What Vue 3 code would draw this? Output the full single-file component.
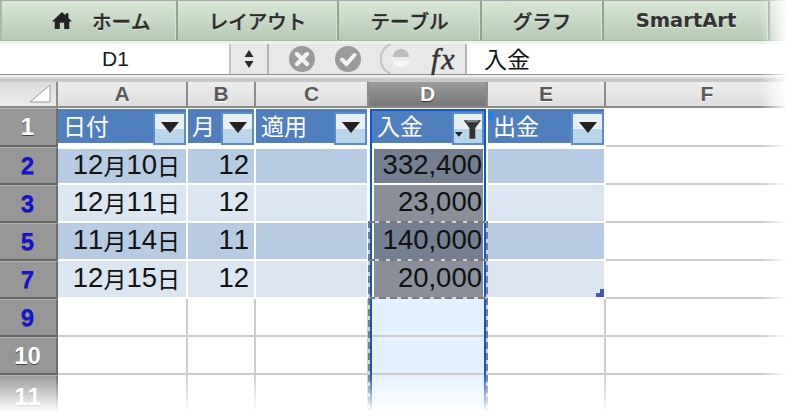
<script setup>
const tabs = ['レイアウト', 'テーブル', 'グラフ']
const letters = ['A', 'B', 'C', 'D', 'E', 'F']
const heads = [
  { t: '日付', c: 'a' },
  { t: '月', c: 'b' },
  { t: '適用', c: 'c' },
  { t: '入金', c: 'd', filter: true },
  { t: '出金', c: 'e' }
]
const rows = [
  { n: 2, m: 12, d: 10, mo: 12, v: '332,400', band: 'dark first' },
  { n: 3, m: 12, d: 11, mo: 12, v: '23,000', band: 'light' },
  { n: 5, m: 11, d: 14, mo: 11, v: '140,000', band: 'dark' },
  { n: 7, m: 12, d: 15, mo: 12, v: '20,000', band: 'light' }
]
const empties = [
  { n: 9, blue: true },
  { n: 10, blue: false },
  { n: 11, blue: false }
]
</script>

<template>
  <div class="page">
    <nav class="ribbon">
      <div class="tab home">
        <svg class="house" width="20" height="17" viewBox="0 0 22 18" preserveAspectRatio="none">
          <path d="M11 0 L15 3.6 V1.2 H18 V6.3 L22 10 H19 V18 H13.4 V11.5 H8.6 V18 H3 V10 H0 Z" fill="#222" />
        </svg>
        <span>ホーム</span>
      </div>
      <div v-for="t in tabs" :key="t" class="tab" :class="'w' + t.length">{{ t }}</div>
      <div class="tab smart">SmartArt</div>
      <div class="tab rest"></div>
    </nav>

    <section class="formula">
      <div class="name">D1</div>
      <div class="spin">
        <svg width="12" height="20" viewBox="0 0 12 20">
          <path d="M6 1 L10.5 8 H1.5 Z M6 19 L1.5 12 H10.5 Z" fill="#2a2a2a" />
        </svg>
      </div>
      <div class="tools">
        <svg class="icon-x" width="26" height="26" viewBox="0 0 26 26">
          <circle cx="13" cy="13" r="13" fill="#9b9b9b" />
          <path d="M8 8 L18 18 M18 8 L8 18" stroke="#f2f2f2" stroke-width="4.4" stroke-linecap="round" />
        </svg>
        <svg class="icon-c" width="26" height="26" viewBox="0 0 26 26">
          <circle cx="13" cy="13" r="13" fill="#9b9b9b" />
          <path d="M7 13.5 L11.5 18 L19.5 9" fill="none" stroke="#f2f2f2" stroke-width="4" stroke-linecap="round" />
        </svg>
        <svg class="icon-f" width="32" height="30" viewBox="0 0 32 30">
          <path d="M11 0 A 16 16 0 0 0 11 30" fill="none" stroke="#c4c4c4" stroke-width="2" />
          <circle cx="21" cy="15" r="8" fill="#eaeaea" />
          <path d="M13 13 A 8 8 0 0 1 29 13 Z" fill="#bdbdbd" />
          <path d="M13.2 17 A 8 8 0 0 0 28.8 17 Z" fill="#f6f6f6" />
        </svg>
        <span class="fx">fx</span>
      </div>
      <div class="input">入金</div>
    </section>

    <main class="sheet">
      <div class="corner">
        <svg width="22" height="18" viewBox="0 0 22 18">
          <path d="M20 0 V17 H0 Z" fill="#fff" stroke="#999" stroke-width="1" />
        </svg>
      </div>
      <div v-for="l in letters" :key="l" class="col" :class="{ on: l === 'D', last: l === 'F' }">{{ l }}</div>

      <div class="num hrow">1</div>
      <div v-for="h in heads" :key="h.t" class="cell top" :class="h.c">
        <div class="band">
          <span class="title">{{ h.t }}</span>
          <span class="btn" :class="{ filt: h.filter }">
            <svg v-if="!h.filter" width="18" height="11" viewBox="0 0 18 11">
              <path d="M0 0 H18 L9 11 Z" fill="#222" />
            </svg>
            <svg v-else width="29" height="23" viewBox="0 0 29 23">
              <path d="M1 14 H9 L5 19 Z" fill="#222" />
              <path d="M10 2 H28 L22 10 V21 H16 V10 Z" fill="#333" />
              <path d="M13 3 H25" stroke="#8a8a8a" stroke-width="2" />
            </svg>
          </span>
        </div>
      </div>
      <div class="cell plain f-top"></div>

      <template v-for="r in rows" :key="r.n">
        <div class="num blue">{{ r.n }}</div>
        <div class="cell data date" :class="r.band">
          <span>{{ r.m }}</span><span class="cjk">月</span><span>{{ r.d }}</span><span class="cjk">日</span>
        </div>
        <div class="cell data month" :class="r.band">{{ r.mo }}</div>
        <div class="cell data" :class="r.band"></div>
        <div class="cell data pick" :class="r.band">{{ r.v }}</div>
        <div class="cell data" :class="r.band"></div>
        <div class="cell plain"></div>
      </template>

      <template v-for="e in empties" :key="e.n">
        <div class="num" :class="{ blue: e.blue }">{{ e.n }}</div>
        <div class="cell plain"></div>
        <div class="cell plain"></div>
        <div class="cell plain"></div>
        <div class="cell plain soft"></div>
        <div class="cell plain"></div>
        <div class="cell plain"></div>
      </template>

      <div class="sel"></div>
      <div class="ants"></div>
      <div class="grip"></div>
      <div class="corner-mark"></div>
    </main>

    <div class="fade-bottom"></div>
    <div class="fade-right"></div>
  </div>
</template>

<style>
html, body { margin: 0; background: #fff; }
</style>

<style scoped>
.page {
  position: relative;
  width: 792px;
  height: 419px;
  overflow: hidden;
  background: #fff;
  font-family: "Liberation Sans", "Noto Sans CJK JP", sans-serif;
  font-kerning: none;
}

/* ribbon */
.ribbon {
  display: flex;
  height: 41px;
  border-top: 1px solid #a9a9a9;
  box-sizing: border-box;
  border-bottom: 1px solid #a6bda6;
  background: linear-gradient(#d9e6d7, #b5cab4);
}
.tab {
  display: flex;
  align-items: center;
  justify-content: center;
  box-sizing: border-box;
  border-right: 2px solid #8ea58e;
  box-shadow: inset -1px 0 0 #d8e4d6;
  font-family: "Noto Sans CJK JP", sans-serif;
  font-weight: 500;
  font-size: 19.5px;
  -webkit-text-stroke: 0.35px #2c2c2c;
  color: #2c2c2c;
  text-shadow: 0 1px 0 #e9f0e8;
}
.home {
  width: 178px;
  justify-content: flex-start;
  padding-left: 50px;
  gap: 20px;
  border-left: 2px solid #a6bda6;
}
.house { margin-top: -1px; }
.w5 { width: 161px; }
.w4 { width: 143px; }
.w3 { width: 122px; }
.smart {
  width: 166px;
  font-family: "DejaVu Sans", sans-serif;
  font-weight: 700;
  font-size: 19.5px;
  -webkit-text-stroke: 0;
  color: #333;
}
.rest { flex: 1; border-right: 0; box-shadow: none; }

/* formula bar */
.formula {
  display: flex;
  height: 41px;
  padding-top: 3px;
  padding-bottom: 6px;
  box-sizing: border-box;
  background: linear-gradient(#eef3ee 0 3px, #e8e8e8 3px 32px, #8f8f8f 32px 34px, #f4f4f4 34px 35px, #c8c8c8 38px);
}
.name {
  width: 229px;
  height: 30px;
  padding-left: 2px;
  box-sizing: border-box;
  background: #fff;
  text-align: center;
  font-size: 21px;
  line-height: 30px;
  color: #1c1c1c;
}
.spin {
  width: 40px;
  height: 30px;
  display: flex;
  align-items: center;
  justify-content: center;
  border-left: 2px solid #c4c4c4;
  border-right: 2px solid #b5b5b5;
  box-sizing: border-box;
  background: #e8e8e8;
}
.tools {
  display: flex;
  align-items: center;
  width: 198px;
  height: 30px;
  box-sizing: border-box;
  padding-left: 20px;
  border-right: 2px solid #b5b5b5;
  background: #e8e8e8;
}
.icon-c { margin-left: 20px; }
.icon-f { margin-left: 19px; flex: none; }
.fx {
  margin-left: 19px;
  font-family: "Liberation Serif", serif;
  font-style: italic;
  font-weight: 400;
  font-size: 30px;
  line-height: 30px;
  letter-spacing: 2px;
  -webkit-text-stroke: 0.5px #333;
  color: #333;
}
.input {
  flex: 1;
  height: 30px;
  background: #fff;
  padding-left: 17px;
  font-family: "Noto Sans CJK JP", sans-serif;
  font-size: 23px;
  line-height: 29px;
  color: #111;
}

/* sheet */
.sheet {
  position: relative;
  display: grid;
  grid-template-columns: 58px 130px 68px 113px 119px 118px 1fr;
  grid-template-rows: 26px 39px repeat(6, 38px) 44px;
}
.corner {
  display: flex;
  align-items: flex-end;
  justify-content: flex-end;
  padding: 0 4px 3px 0;
  box-sizing: border-box;
  background: linear-gradient(#dcdcdc, #ececec);
  border-right: 2px solid #8d8d8d;
  border-bottom: 2px solid #8a8a8a;
}
.col {
  display: flex;
  align-items: center;
  justify-content: center;
  box-sizing: border-box;
  background: linear-gradient(#ededed, #dedede);
  border-right: 2px solid #8d8d8d;
  border-bottom: 2px solid #8a8a8a;
  font-weight: 700;
  font-size: 21px;
  color: #5a5a5a;
  text-shadow: 0 1px 0 #fff;
}
.col.last { border-right: 0; padding-left: 16px; }
.col.on {
  background: linear-gradient(#9c9c9c, #777);
  color: #fff;
  text-shadow: 0 1px 1px #333;
}
.num {
  display: flex;
  align-items: center;
  justify-content: center;
  box-sizing: border-box;
  background: #979797;
  border-top: 1px solid #b4b4b4;
  border-right: 2px solid #6d6d6d;
  border-bottom: 2px solid #666;
  padding-right: 1px;
  font-family: "Liberation Sans", sans-serif;
  font-weight: 700;
  font-size: 24px;
  color: #fff;
  text-shadow: 0 1px 0 #444;
}
.num.blue {
  color: #1212d6;
  text-shadow: 0 1px 0 #555;
}
.cell {
  box-sizing: border-box;
  min-width: 0;
  border-right: 2px solid #ccc;
  border-bottom: 2px solid #ccc;
  background-clip: padding-box;
}
.plain { background: #fff; }
.f-top { border-right: 0; }
.cell:nth-child(7n) { border-right: 0; }
.top {
  padding: 1px 0 0;
  border-color: #fff;
  border-bottom-width: 4px;
}
.top.d {
  border-left: 3px solid #fff;
  border-right: 4px solid #fff;
}
.band {
  display: flex;
  align-items: stretch;
  justify-content: space-between;
  height: 34px;
  background: #4f80bd;
  color: #fff;
}
.title {
  padding: 0 0 0 5px;
  font-family: "Noto Sans CJK JP", sans-serif;
  font-size: 23px;
  line-height: 33px;
  font-weight: 400;
}
.top.b .title { padding-left: 4px; }
.btn {
  display: flex;
  align-items: flex-start;
  justify-content: center;
  width: 33px;
  height: 33px;
  margin-top: 3px;
  padding-top: 8px;
  box-sizing: border-box;
  border: 2px solid #5b8ccb;
  background: linear-gradient(#e8eff5 0 50%, #b9d6e9 50%);
}
.btn.filt {
  padding: 4px 0 0;
  margin-left: -4px;
  width: 32px;
}

.data {
  display: flex;
  align-items: center;
  justify-content: flex-end;
  font-size: 27.5px;
  color: #111;
  line-height: 1;
  padding-bottom: 2px;
}
.dark { background-color: #b7cce3; border-color: #fff; }
.light { background-color: #dce6f1; border-color: #fff; }
.first { border-top: 2px solid #fff; }
.date { padding-right: 6px; }
.month { padding-right: 5px; }
.cjk {
  font-family: "Noto Sans CJK JP", sans-serif;
  font-size: 23px;
}
.pick {
  border-left: 5px solid #fff;
  border-right: 5px solid #fff;
  padding-right: 1px;
}
.pick.dark { background-color: #747f91; }
.pick.light { background-color: #8b8f99; }
.soft {
  background-color: #e3f1fe;
  border-left: 3px solid #fff;
  border-right: 4px solid #fff;
}

/* selection overlays */
.sel {
  position: absolute;
  left: 370px;
  top: 27px;
  width: 116px;
  height: 320px;
  box-sizing: border-box;
  border: 2px solid #0f55d6;
  border-bottom: 0;
}
.ants {
  position: absolute;
  left: 368px;
  top: 139px;
  width: 120px;
  height: 220px;
  background:
    repeating-linear-gradient(180deg, #7c7c7c 0 7px, #d4d4d4 7px 11px) left top / 2px 100% no-repeat,
    repeating-linear-gradient(180deg, #7c7c7c 0 7px, #d4d4d4 7px 11px) right top / 2px 100% no-repeat,
    repeating-linear-gradient(90deg, #7c7c7c 0 7px, #d4d4d4 7px 11px) left 0 top 0 / 100% 2px no-repeat,
    repeating-linear-gradient(90deg, #7c7c7c 0 7px, #d4d4d4 7px 11px) left 0 top 38px / 100% 2px no-repeat,
    repeating-linear-gradient(90deg, #7c7c7c 0 7px, #d4d4d4 7px 11px) left 0 top 76px / 100% 2px no-repeat;
}
.grip {
  position: absolute;
  left: 488px;
  top: 29px;
  width: 5px;
  height: 9px;
  background: #2a7de0;
}
.corner-mark {
  position: absolute;
  left: 596px;
  top: 207px;
  width: 8px;
  height: 8px;
  background: linear-gradient(#4557b5, #4557b5) right top / 4px 4px no-repeat,
    linear-gradient(#4557b5, #4557b5) left bottom / 100% 4px no-repeat;
}

.fade-bottom {
  position: absolute;
  left: 0;
  right: 0;
  top: 374px;
  height: 45px;
  background: linear-gradient(rgba(255,255,255,0), #fff 85%);
}
.fade-right {
  position: absolute;
  top: 0;
  bottom: 0;
  right: 0;
  width: 32px;
  background: linear-gradient(90deg, rgba(255,255,255,0), #fff 85%);
}
</style>
